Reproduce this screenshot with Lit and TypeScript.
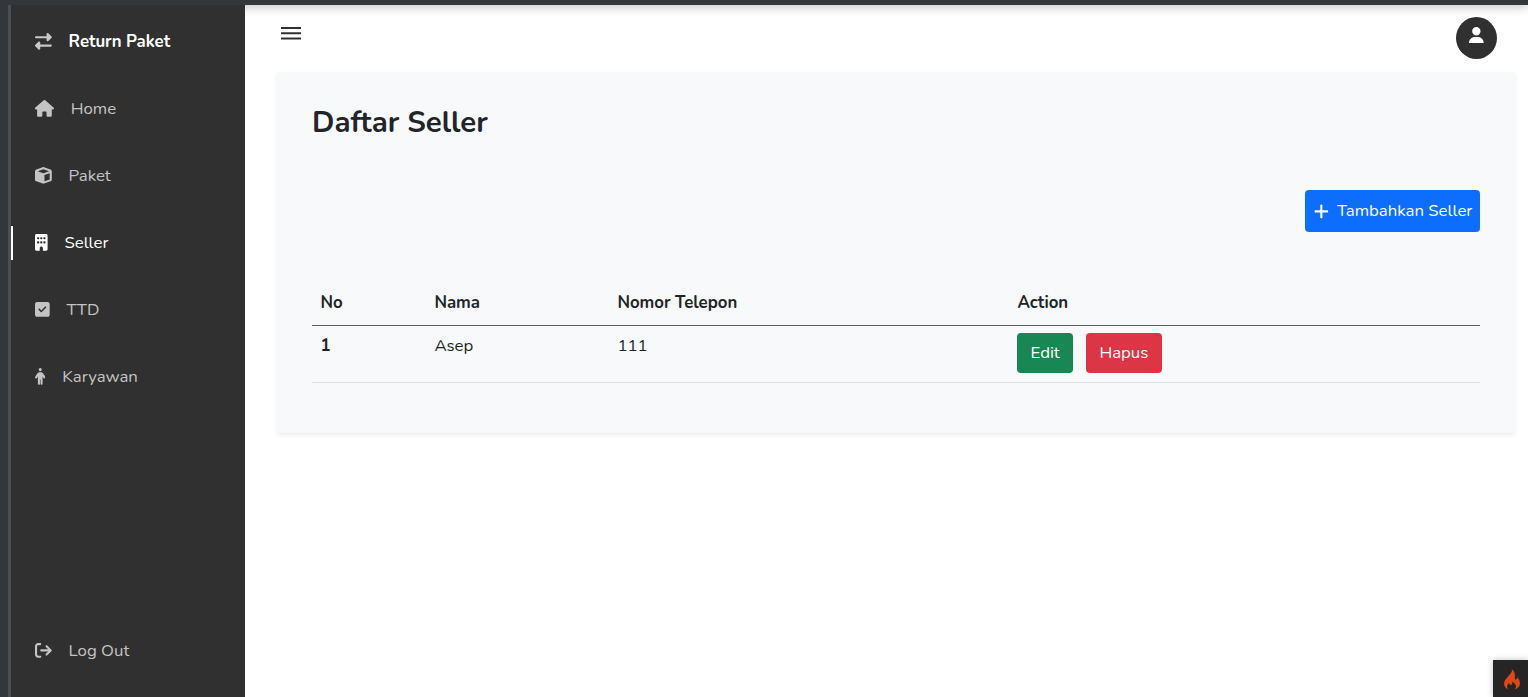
import { LitElement, html, css, svg } from "lit";
import { customElement, property } from "lit/decorators.js";
import { classMap } from "lit/directives/class-map.js";

interface Glyph {
  width: number;
  path: string;
}

const glyphs: Record<string, Glyph> = {
  swap: { width: 512, path: "M32 96l320 0V32c0-12.9 7.8-24.6 19.8-29.6s25.7-2.2 34.9 6.9l96 96c6 6 9.4 14.1 9.4 22.6s-3.4 16.6-9.4 22.6l-96 96c-9.2 9.2-22.9 11.9-34.9 6.9s-19.8-16.6-19.8-29.6V160L32 160c-17.7 0-32-14.3-32-32s14.3-32 32-32zM480 352c17.7 0 32 14.3 32 32s-14.3 32-32 32H160v64c0 12.9-7.8 24.6-19.8 29.6s-25.7 2.2-34.9-6.9l-96-96c-6-6-9.4-14.1-9.4-22.6s3.4-16.6 9.4-22.6l96-96c9.2-9.2 22.9-11.9 34.9-6.9s19.8 16.6 19.8 29.6l0 64H480z" },
  home: { width: 576, path: "M575.8 255.5c0 18-15 32.1-32 32.1h-32l.7 160.2c0 2.7-.2 5.4-.5 8.1V472c0 22.1-17.9 40-40 40H456c-1.1 0-2.2 0-3.3-.1c-1.4 .1-2.8 .1-4.2 .1H416 392c-22.1 0-40-17.9-40-40V448 384c0-17.7-14.3-32-32-32H256c-17.7 0-32 14.3-32 32v64 24c0 22.1-17.9 40-40 40H160 128.1c-1.5 0-3-.1-4.5-.2c-1.2 .1-2.4 .2-3.6 .2H104c-22.1 0-40-17.9-40-40V360c0-.9 0-1.9 .1-2.8V287.6H32c-18 0-32-14-32-32.1c0-9 3-17 10-24L266.4 8c7-7 15-8 22-8s15 2 21 7L564.8 231.5c8 7 12 15 11 24z" },
  cube: { width: 512, path: "M234.5 5.7c13.9-5 29.1-5 43.1 0l192 68.6C495 83.4 512 107.5 512 134.6V377.4c0 27-17 51.2-42.5 60.3l-192 68.6c-13.9 5-29.1 5-43.1 0l-192-68.6C17 428.6 0 404.5 0 377.4V134.6c0-27 17-51.2 42.5-60.3l192-68.6zM256 66L82.3 128 256 190l173.7-62L256 66zm32 368.6l160-57.1v-188L288 246.6v188z" },
  building: { width: 384, path: "M48 0C21.5 0 0 21.5 0 48V464c0 26.5 21.5 48 48 48h96V432c0-26.5 21.5-48 48-48s48 21.5 48 48v80h96c26.5 0 48-21.5 48-48V48c0-26.5-21.5-48-48-48H48zM64 240c0-8.8 7.2-16 16-16h32c8.8 0 16 7.2 16 16v32c0 8.8-7.2 16-16 16H80c-8.8 0-16-7.2-16-16V240zm112-16h32c8.8 0 16 7.2 16 16v32c0 8.8-7.2 16-16 16H176c-8.8 0-16-7.2-16-16V240c0-8.8 7.2-16 16-16zm80 16c0-8.8 7.2-16 16-16h32c8.8 0 16 7.2 16 16v32c0 8.8-7.2 16-16 16H272c-8.8 0-16-7.2-16-16V240zM80 96h32c8.8 0 16 7.2 16 16v32c0 8.8-7.2 16-16 16H80c-8.8 0-16-7.2-16-16V112c0-8.8 7.2-16 16-16zm80 16c0-8.8 7.2-16 16-16h32c8.8 0 16 7.2 16 16v32c0 8.8-7.2 16-16 16H176c-8.8 0-16-7.2-16-16V112zM272 96h32c8.8 0 16 7.2 16 16v32c0 8.8-7.2 16-16 16H272c-8.8 0-16-7.2-16-16V112c0-8.8 7.2-16 16-16z" },
  check: { width: 448, path: "M64 32C28.7 32 0 60.7 0 96V416c0 35.3 28.7 64 64 64H384c35.3 0 64-28.7 64-64V96c0-35.3-28.7-64-64-64H64zM337 209L209 337c-9.4 9.4-24.6 9.4-33.9 0l-64-64c-9.4-9.4-9.4-24.6 0-33.9s24.6-9.4 33.9 0l47 47L303 175c9.4-9.4 24.6-9.4 33.9 0s9.4 24.6 0 33.9z" },
  person: { width: 320, path: "M112 48a48 48 0 1 1 96 0 48 48 0 1 1 -96 0zm40 304V480c0 17.7-14.3 32-32 32s-32-14.3-32-32V256.9L59.4 304.5c-9.1 15.1-28.8 20-43.9 10.9s-20-28.8-10.9-43.9l58.3-97c17.4-28.9 48.6-46.6 82.3-46.6h29.7c33.7 0 64.9 17.7 82.3 46.6l58.3 97c9.1 15.1 4.2 34.8-10.9 43.9s-34.8 4.2-43.9-10.9L232 256.9V480c0 17.7-14.3 32-32 32s-32-14.3-32-32V352H152z" },
  logout: { width: 512, path: "M502.6 278.6c12.5-12.5 12.5-32.8 0-45.3l-128-128c-12.5-12.5-32.8-12.5-45.3 0s-12.5 32.8 0 45.3L402.7 224 192 224c-17.7 0-32 14.3-32 32s14.3 32 32 32l210.7 0-73.4 73.4c-12.5 12.5-12.5 32.8 0 45.3s32.8 12.5 45.3 0l128-128zM160 96c17.7 0 32-14.3 32-32s-14.3-32-32-32L96 32C43 32 0 75 0 128L0 384c0 53 43 96 96 96l64 0c17.7 0 32-14.3 32-32s-14.3-32-32-32l-64 0c-17.7 0-32-14.3-32-32l0-256c0-17.7 14.3-32 32-32l64 0z" },
  user: { width: 448, path: "M224 256A128 128 0 1 0 224 0a128 128 0 1 0 0 256zm-45.7 48C79.8 304 0 383.8 0 482.3C0 498.7 13.3 512 29.7 512H418.3c16.4 0 29.7-13.3 29.7-29.7C448 383.8 368.2 304 269.7 304H178.3z" },
  plus: { width: 448, path: "M256 80c0-17.7-14.3-32-32-32s-32 14.3-32 32V224H48c-17.7 0-32 14.3-32 32s14.3 32 32 32H192V432c0 17.7 14.3 32 32 32s32-14.3 32-32V288H400c17.7 0 32-14.3 32-32s-14.3-32-32-32H256V80z" },
};

@customElement("app-icon")
export class AppIcon extends LitElement {
  @property() name = "";
  static styles = css`
    :host { display: block; flex: none; height: 16.8px; }
    svg { display: block; height: 100%; width: auto; fill: currentColor; }
  `;
  render() {
    const g = glyphs[this.name];
    return html`<svg viewBox="0 0 ${g.width} 512">${svg`<path d=${g.path}></path>`}</svg>`;
  }
}

const links = [
  { icon: "swap", label: "Return Paket", kind: "brand" },
  { icon: "home", label: "Home", kind: "home" },
  { icon: "cube", label: "Paket", kind: "paket" },
  { icon: "building", label: "Seller", kind: "active" },
  { icon: "check", label: "TTD", kind: "ttd" },
  { icon: "person", label: "Karyawan", kind: "karyawan" },
  { icon: "logout", label: "Log Out", kind: "logout" },
];

const sellers = [{ no: 1, name: "Asep", phone: "111" }];

@customElement("app-root")
export class AppRoot extends LitElement {
  static styles = css`
    :host {
      display: block;
      height: 100vh;
      overflow: hidden;
      font-family: Nunito, Lato, sans-serif;
      font-size: 16.8px;
      line-height: 25.2px;
      color: #212529;
    }
    * { box-sizing: border-box; }
    .page { display: flex; flex-direction: column; height: 100%; background: #fff; }
    .top { height: 5px; flex: none; background: #33373b; z-index: 2; box-shadow: 0 0 11px rgba(0, 0, 0, 0.45); }
    .body { flex: 1; display: flex; min-height: 0; }
    .edge { width: 11px; flex: none; background: #33373b; border-right: 3px solid #4b4f52; z-index: 3; }
    .side { width: 234px; flex: none; background: #303030; display: flex; flex-direction: column; padding: 2.6px 0 12.6px; z-index: 3; }
    .link { height: 67.1px; flex: none; display: flex; align-items: center; gap: 16.8px; padding-left: 24px; color: #c4c4c4; position: relative; }
    .link.brand, .link.active { color: #fff; }
    .link.brand app-icon { color: #c8c8c8; }
    .link.brand { font-weight: 700; }
    .link.active::before { content: ""; position: absolute; left: 0; top: 17px; width: 2px; height: 34px; background: #fff; }
    .link.logout { margin-top: auto; }
    main { flex: 1; min-width: 0; display: flex; flex-direction: column; padding: 0 13px 0 32px; }
    .bar { height: 67px; flex: none; display: flex; justify-content: space-between; align-items: flex-start; padding: 11.6px 18px 0 4px; }
    .menu { display: block; width: 20px; height: 13px; margin-top: 10.4px; fill: #303030; }
    .avatar { width: 41px; height: 42px; border-radius: 50%; background: #303030; color: #fff; display: flex; justify-content: center; padding-top: 10px; }
    .card { height: 361px; background: #f8f9fb; box-shadow: 0 2px 4px rgba(0, 0, 0, 0.075); padding: 30px 35px 0; }
    h1 { margin: 0; font-size: 29.4px; line-height: 40px; font-weight: 700; }
    .tools { display: flex; justify-content: flex-end; margin-top: 48px; }
    button { border: 0; border-radius: 4px; font: inherit; color: #fff; padding: 0; height: 40px; display: flex; align-items: center; justify-content: center; }
    .add { width: 175px; height: 42px; background: #0d6efd; gap: 8.4px; padding-left: 1.2px; }
    table { margin-top: 49px; width: 1168px; table-layout: fixed; border-collapse: collapse; }
    th, td { text-align: left; vertical-align: top; padding: 8px 8.4px 0; }
    td:last-child { padding-left: 8px; }
    thead th { height: 44px; padding-top: 9px; border-bottom: 1px solid #5b5f63; }
    tbody th, tbody td { height: 57px; padding-top: 7.5px; border-bottom: 1px solid #dee2e6; }
    .c-no { width: 114px; }
    .c-name { width: 183px; }
    .c-phone { width: 400px; }
    .actions { display: flex; gap: 13.4px; padding-left: 0.4px; }
    .edit { width: 55.4px; background: #198754; }
    .delete { width: 75.4px; background: #dc3545; }
    .debug { position: absolute; right: 0; bottom: 0; width: 35px; height: 37px; background: #252525; box-shadow: 0 0 6px rgba(0, 0, 0, 0.25); padding: 9px 0 0 11px; }
    .debug svg { display: block; width: 16px; height: 21px; fill: #dd4814; }
  `;

  render() {
    return html`
      <div class="page">
        <div class="top"></div>
        <div class="body">
          <div class="edge"></div>
          <nav class="side">
            ${links.map((l) => html`
              <div class=${classMap({ link: true, [l.kind]: true })}>
                <app-icon name=${l.icon}></app-icon><span>${l.label}</span>
              </div>`)}
          </nav>
          <main>
            <div class="bar">
              <svg class="menu" viewBox="0 0 20 13"><path d="M0 0H20V2.100H0ZM0 5.200H20V7.300H0ZM0 10.500H20V12.600H0Z"></path></svg>
              <div class="avatar"><app-icon name="user"></app-icon></div>
            </div>
            <section class="card">
              <h1>Daftar Seller</h1>
              <div class="tools">
                <button class="add"><app-icon name="plus"></app-icon><span>Tambahkan Seller</span></button>
              </div>
              <table>
                <thead>
                  <tr>
                    <th class="c-no">No</th>
                    <th class="c-name">Nama</th>
                    <th class="c-phone">Nomor Telepon</th>
                    <th>Action</th>
                  </tr>
                </thead>
                <tbody>
                  ${sellers.map((s) => html`
                    <tr>
                      <th>${s.no}</th>
                      <td>${s.name}</td>
                      <td>${s.phone}</td>
                      <td><div class="actions"><button class="edit">Edit</button><button class="delete">Hapus</button></div></td>
                    </tr>`)}
                </tbody>
              </table>
            </section>
          </main>
        </div>
        <div class="debug">
          <svg viewBox="0 0 16 21"><path d="M7.6 0C9 3 5.800 5.300 3.500 8C1.500 10.300 0 12.300 0 14.600C0 17.500 1.800 19.600 4.600 20.600C3.300 19.400 2.900 18.200 3.300 16.700C3.600 15.500 4.400 14.800 5 13.800C5.300 15 5.600 15.800 6.800 15.900C8.700 16 8.300 14 8 12.800C9.700 13.600 12.300 15.600 12 17.800C11.900 19 11.400 19.800 10.500 20.500C13.800 19.600 16 17.300 16 14.200C16 11.400 14.300 9.300 12.900 7.900C13.100 9.200 12.900 10.300 12 10.500C10.600 10.700 10.800 9.100 10.900 7.500C11.100 4.500 10.300 1.500 7.600 0Z"></path></svg>
        </div>
      </div>
    `;
  }
}
